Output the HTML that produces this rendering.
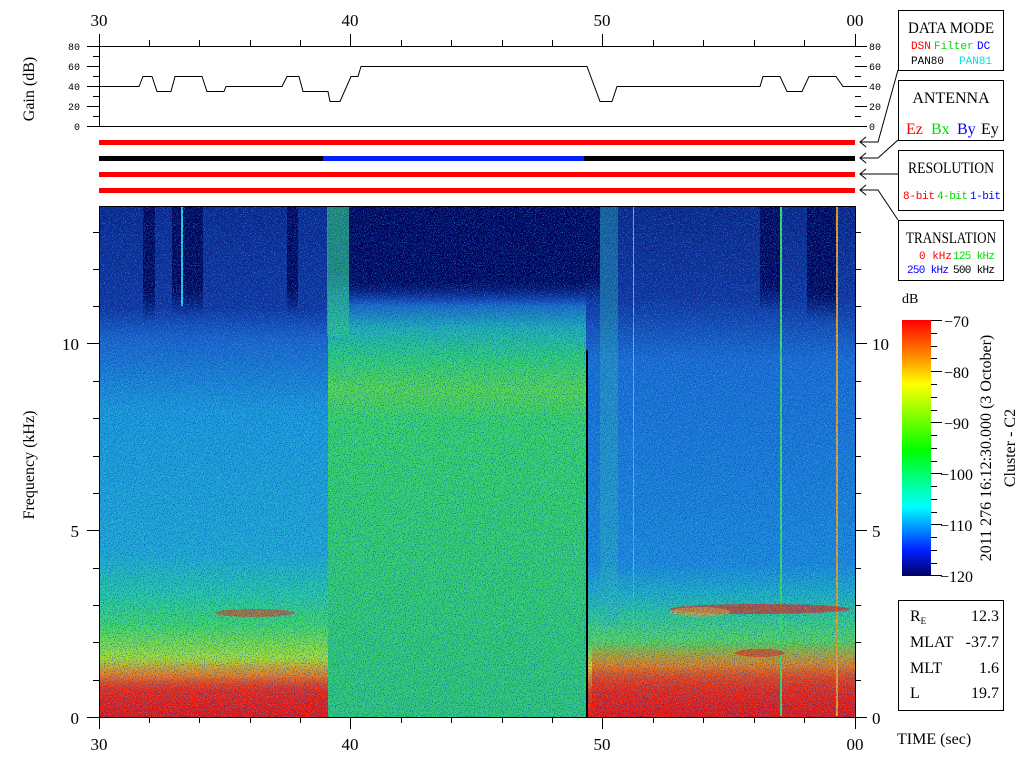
<!DOCTYPE html>
<html><head><meta charset="utf-8"><style>
html,body{margin:0;padding:0;background:#fff;width:1024px;height:768px;overflow:hidden}
svg{display:block}
.s{font-family:"Liberation Serif",serif}
.m{font-family:"Liberation Mono",monospace}
</style></head><body>
<svg width="1024" height="768" viewBox="0 0 1024 768" xmlns="http://www.w3.org/2000/svg">
<defs>
<linearGradient id="gL" x1="0" y1="206" x2="0" y2="717" gradientUnits="userSpaceOnUse">
<stop offset="0" stop-color="#0a2288"/><stop offset="0.2" stop-color="#10309a"/>
<stop offset="0.26" stop-color="#1a60c8"/><stop offset="0.4" stop-color="#1c98d8"/>
<stop offset="0.68" stop-color="#20a8d0"/><stop offset="0.76" stop-color="#28c8a0"/>
<stop offset="0.82" stop-color="#40d860"/><stop offset="0.88" stop-color="#a0e030"/>
<stop offset="0.92" stop-color="#f0b020"/><stop offset="0.95" stop-color="#f03010"/>
<stop offset="1" stop-color="#f01008"/></linearGradient>
<linearGradient id="gM" x1="0" y1="206" x2="0" y2="717" gradientUnits="userSpaceOnUse">
<stop offset="0" stop-color="#000052"/><stop offset="0.13" stop-color="#000058"/>
<stop offset="0.18" stop-color="#1850c8"/><stop offset="0.24" stop-color="#20b0b0"/>
<stop offset="0.3" stop-color="#30d070"/><stop offset="0.36" stop-color="#58d848"/>
<stop offset="0.42" stop-color="#38d460"/><stop offset="1" stop-color="#30c870"/></linearGradient>
<linearGradient id="gR" x1="0" y1="206" x2="0" y2="717" gradientUnits="userSpaceOnUse">
<stop offset="0" stop-color="#0a2080"/><stop offset="0.18" stop-color="#102e98"/>
<stop offset="0.3" stop-color="#1a6ad0"/><stop offset="0.7" stop-color="#1c88d8"/>
<stop offset="0.76" stop-color="#20b0c0"/><stop offset="0.8" stop-color="#30c890"/>
<stop offset="0.86" stop-color="#60d850"/><stop offset="0.9" stop-color="#e0d020"/>
<stop offset="0.95" stop-color="#f04010"/><stop offset="1" stop-color="#f01008"/></linearGradient>
<linearGradient id="nv" x1="0" y1="0" x2="0" y2="1">
<stop offset="0" stop-color="#000055"/><stop offset="0.75" stop-color="#000055"/><stop offset="1" stop-color="#000055" stop-opacity="0"/></linearGradient>
<linearGradient id="rd" x1="0" y1="0" x2="0" y2="1">
<stop offset="0" stop-color="#f02010" stop-opacity="0"/><stop offset="0.5" stop-color="#f02010" stop-opacity="0.7"/><stop offset="1" stop-color="#f01008" stop-opacity="0.9"/></linearGradient>
<linearGradient id="cb" x1="0" y1="0" x2="0" y2="1">
<stop offset="0" stop-color="#ff0000"/><stop offset="0.13" stop-color="#ff8000"/>
<stop offset="0.25" stop-color="#ffff00"/><stop offset="0.51" stop-color="#00ff00"/>
<stop offset="0.73" stop-color="#00ffff"/><stop offset="0.9" stop-color="#0020ff"/>
<stop offset="1" stop-color="#000060"/></linearGradient>
<filter id="nz" x="0" y="0" width="100%" height="100%">
<feTurbulence type="fractalNoise" baseFrequency="0.9" numOctaves="1" seed="3"/>
<feColorMatrix type="matrix" values="0 0 0 0 0  0 0 0 0 0.05  0 0 0 0 0.55  6 0 0 0 -3.1"/>
</filter>
<filter id="nz2" x="0" y="0" width="100%" height="100%">
<feTurbulence type="fractalNoise" baseFrequency="0.9" numOctaves="1" seed="7"/>
<feColorMatrix type="matrix" values="0 0 0 0 0.1  0 0 0 0 0.9  0 0 0 0 0.9  6 0 0 0 -3.2"/>
</filter>
</defs>

<rect x="99" y="206" width="229" height="511" fill="url(#gL)"/>
<rect x="328" y="206" width="258" height="511" fill="url(#gM)"/>
<rect x="586" y="206" width="269" height="511" fill="url(#gR)"/>
<rect x="99" y="660" width="229" height="57" fill="url(#rd)"/>
<rect x="592" y="640" width="263" height="77" fill="url(#rd)"/>
<rect x="327" y="206" width="22" height="130" fill="#30c880" opacity="0.7"/>
<rect x="349" y="206" width="237" height="100" fill="url(#nv)"/>
<rect x="143" y="206" width="12" height="115" fill="url(#nv)"/>
<rect x="172" y="206" width="31" height="110" fill="url(#nv)"/>
<rect x="181" y="206" width="2" height="100" fill="#20d0e0"/>
<rect x="287" y="206" width="11" height="110" fill="url(#nv)"/>
<rect x="586" y="206" width="14" height="95" fill="url(#nv)"/>
<rect x="600" y="206" width="18" height="420" fill="#30b8b0" opacity="0.4"/>
<rect x="760" y="206" width="20" height="105" fill="url(#nv)"/>
<rect x="807" y="206" width="30" height="115" fill="url(#nv)"/>
<rect x="780" y="206" width="2" height="510" fill="#40e060"/>
<rect x="836" y="206" width="2" height="510" fill="#f0a020"/>
<rect x="633" y="206" width="1" height="430" fill="#40e060"/>
<ellipse cx="760" cy="609" rx="90" ry="5" fill="#f02010" opacity="0.7"/>
<ellipse cx="700" cy="612" rx="30" ry="5" fill="#f0a020" opacity="0.6"/>
<ellipse cx="760" cy="653" rx="25" ry="4" fill="#f02010" opacity="0.6"/>
<ellipse cx="255" cy="613" rx="40" ry="4" fill="#f03010" opacity="0.6"/>
<rect x="99" y="206" width="756" height="511" filter="url(#nz)" opacity="0.6"/>
<rect x="99" y="206" width="756" height="511" filter="url(#nz2)" opacity="0.35"/>
<rect x="586" y="350" width="2" height="367" fill="#000"/>

<g stroke="#000" stroke-width="1" fill="none">
<line x1="87" y1="46.5" x2="855" y2="46.5"/>
<line x1="87" y1="126.5" x2="855" y2="126.5"/>
<line x1="99.5" y1="34" x2="99.5" y2="126"/>
<path d="M87 46.5h12M93 56.5h6M87 66.5h12M93 76.5h6M87 86.5h12M93 96.5h6M87 106.5h12M93 116.5h6M87 126.5h12"/>
<path d="M855 46.5h12M855 56.5h6M855 66.5h12M855 76.5h6M855 86.5h12M855 96.5h6M855 106.5h12M855 116.5h6M855 126.5h12"/>
<path d="M149.5 40v6M199.5 40v6M250.5 40v6M300.5 40v6M350.5 34v12M401.5 40v6M451.5 40v6M502.5 40v6M552.5 40v6M602.5 34v12M653.5 40v6M703.5 40v6M754.5 40v6M804.5 40v6M855.5 34v12"/>
<polyline points="100,86.5 139,86.5 143,76.5 152,76.5 157,91.5 171,91.5 175,76.5 202,76.5 207,91.5 224,91.5 226,86.5 282,86.5 287,76.5 299,76.5 303,91.5 328,91.5 330,101.5 340,101.5 351,76.5 358,76.5 361,66.5 587,66.5 600,101.5 612,101.5 617,86.5 760,86.5 763,76.5 780,76.5 787,91.5 802,91.5 809,76.5 836,76.5 843,86.5 855,86.5"/>
<rect x="99.5" y="206.5" width="756" height="511"/>
<path d="M87 717.5h12M87 530.5h12M87 343.5h12M93 680.5h6M93 642.5h6M93 605.5h6M93 568.5h6M93 493.5h6M93 456.5h6M93 418.5h6M93 381.5h6M93 306.5h6M93 269.5h6M93 232.5h6"/>
<path d="M855 717.5h12M855 530.5h12M855 343.5h12M855 680.5h6M855 642.5h6M855 605.5h6M855 568.5h6M855 493.5h6M855 456.5h6M855 418.5h6M855 381.5h6M855 306.5h6M855 269.5h6M855 232.5h6"/>
<path d="M99.5 717v12M149.5 717v6M199.5 717v6M250.5 717v6M300.5 717v6M350.5 717v12M401.5 717v6M451.5 717v6M502.5 717v6M552.5 717v6M602.5 717v12M653.5 717v6M703.5 717v6M754.5 717v6M804.5 717v6M855.5 717v12"/>
<rect x="898.5" y="10.5" width="105" height="60"/>
<rect x="898.5" y="80.5" width="105" height="60"/>
<rect x="898.5" y="150.5" width="105" height="60"/>
<rect x="898.5" y="220.5" width="105" height="60"/>
<rect x="898.5" y="600.5" width="105" height="110"/>
<path d="M898 70L878 142H860M866 137L860 142L866 147"/>
<path d="M898 140L878 158H860M866 153L860 158L866 163"/>
<path d="M898 174H860M866 169L860 174L866 179"/>
<path d="M898 220L878 190H860M866 185L860 190L866 195"/>
<path d="M931 320.5h11M931 371.5h11M931 422.5h11M931 473.5h11M931 524.5h11M931 575.5h11M931 333.5h6M931 346.5h6M931 358.5h6M931 384.5h6M931 397.5h6M931 410.5h6M931 435.5h6M931 448.5h6M931 461.5h6M931 486.5h6M931 499.5h6M931 512.5h6M931 537.5h6M931 550.5h6M931 563.5h6"/>
</g>
<rect x="99" y="140" width="756" height="5" fill="#ff0000"/>
<rect x="99" y="156" width="224" height="5" fill="#000"/>
<rect x="323" y="156" width="261" height="5" fill="#0020ff"/>
<rect x="584" y="156" width="271" height="5" fill="#000"/>
<rect x="99" y="172" width="756" height="5" fill="#ff0000"/>
<rect x="99" y="188" width="756" height="5" fill="#ff0000"/>
<rect x="902" y="320" width="29" height="256" fill="url(#cb)"/>

<g class="s" font-size="17" text-anchor="middle" fill="#000">
<text x="99" y="26">30</text><text x="350" y="26">40</text><text x="602" y="26">50</text><text x="855" y="26">00</text>
<text x="99" y="750">30</text><text x="350" y="750">40</text><text x="602" y="750">50</text><text x="855" y="750">00</text>
</g>
<g class="s" font-size="17" text-anchor="end">
<text x="79" y="350">10</text><text x="79" y="537">5</text><text x="79" y="724">0</text>
</g>
<g class="s" font-size="17">
<text x="872" y="350">10</text><text x="872" y="537">5</text><text x="872" y="724">0</text>
</g>
<g class="m" font-size="10" text-anchor="end">
<text x="80" y="50">80</text><text x="80" y="70">60</text><text x="80" y="90">40</text><text x="80" y="110">20</text><text x="80" y="130">0</text>
</g>
<g class="m" font-size="10">
<text x="869" y="50">80</text><text x="869" y="70">60</text><text x="869" y="90">40</text><text x="869" y="110">20</text><text x="869" y="130">0</text>
</g>
<text class="s" font-size="16" text-anchor="middle" transform="translate(34,89) rotate(-90)">Gain (dB)</text>
<text class="s" font-size="16" text-anchor="middle" transform="translate(34,465) rotate(-90)">Frequency (kHz)</text>

<g class="s" font-size="16" text-anchor="middle">
<text x="951" y="33" textLength="86" lengthAdjust="spacingAndGlyphs">DATA MODE</text>
<text x="951" y="103">ANTENNA</text>
<text x="951" y="173" textLength="86" lengthAdjust="spacingAndGlyphs">RESOLUTION</text>
<text x="951" y="243" textLength="90" lengthAdjust="spacingAndGlyphs">TRANSLATION</text>
</g>
<g class="m" font-size="11">
<text x="911" y="49" fill="#ff0000">DSN</text><text x="934" y="49" fill="#00dd00">Filter</text><text x="977" y="49" fill="#0000ff">DC</text>
<text x="911" y="64" fill="#000">PAN80</text><text x="959" y="64" fill="#00e0e0">PAN81</text>
<text x="903" y="199" fill="#ff0000" textLength="32">8-bit</text><text x="937" y="199" fill="#00dd00" textLength="31">4-bit</text><text x="970" y="199" fill="#0000ff" textLength="31">1-bit</text>
<text x="919" y="259" fill="#ff0000">0 kHz</text><text x="953" y="259" fill="#00dd00" textLength="42">125 kHz</text>
<text x="907" y="273" fill="#0000ff" textLength="42">250 kHz</text><text x="953" y="273" fill="#000" textLength="42">500 kHz</text>
</g>
<g class="s" font-size="16">
<text x="906" y="134" fill="#ff0000">Ez</text><text x="931" y="134" fill="#00dd00">Bx</text><text x="957" y="134" fill="#0000ff">By</text><text x="981" y="134" fill="#000">Ey</text>
</g>
<text class="s" font-size="14" x="902" y="303">dB</text>
<g class="s" font-size="16">
<text x="944" y="327">−70</text><text x="944" y="378">−80</text><text x="944" y="429">−90</text><text x="940" y="480">−100</text><text x="940" y="531">−110</text><text x="940" y="582">−120</text>
</g>
<text class="s" font-size="16" text-anchor="middle" transform="translate(991,448) rotate(-90)">2011 276 16:12:30.000 (3 October)</text>
<text class="s" font-size="16" text-anchor="middle" transform="translate(1015,448) rotate(-90)">Cluster - C2</text>
<g class="s" font-size="16">
<text x="910" y="621">R<tspan font-size="9" dy="3">E</tspan></text>
<text x="910" y="647">MLAT</text><text x="910" y="673">MLT</text><text x="910" y="698">L</text>
</g>
<g class="s" font-size="16" text-anchor="end">
<text x="999" y="621">12.3</text><text x="999" y="647">-37.7</text><text x="999" y="673">1.6</text><text x="999" y="698">19.7</text>
</g>
<text class="s" font-size="16" x="897" y="744">TIME (sec)</text>
</svg>
</body></html>
